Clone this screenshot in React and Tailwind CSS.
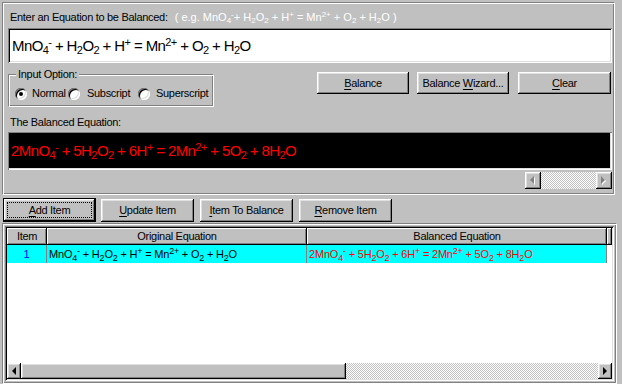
import React from "react";

function parseEq(s) {
  const out = [];
  let buf = "";
  let i = 0;
  const flush = () => {
    if (buf) out.push({ t: buf, k: "n" });
    buf = "";
  };
  while (i < s.length) {
    const c = s[i];
    if (c === "_" || c === "^") {
      flush();
      let t = "";
      if (s[i + 1] === "{") {
        const j = s.indexOf("}", i + 2);
        t = s.slice(i + 2, j);
        i = j + 1;
      } else {
        t = s[i + 1];
        i += 2;
      }
      out.push({ t, k: c === "_" ? "b" : "p" });
    } else {
      buf += c;
      i++;
    }
  }
  flush();
  return out;
}

function Eq({ s, sub, sup, className }) {
  const parts = parseEq(s);
  return (
    <span className={"whitespace-pre " + (className || "")}>
      {parts.map((p, i) =>
        p.k === "n" ? (
          <span key={i}>{p.t}</span>
        ) : (
          <span key={i} className={p.k === "b" ? sub : sup}>
            {p.t}
          </span>
        )
      )}
    </span>
  );
}

const EQ = "MnO_4^- + H_2O_2 + H^+ = Mn^{2+} + O_2 + H_2O";
const BAL = "2MnO_4^- + 5H_2O_2 + 6H^+ = 2Mn^{2+} + 5O_2 + 8H_2O";

function Btn({ children, className }) {
  return (
    <div
      className={
        "flex items-center justify-center bg-[#c0c0c0] shadow-[inset_-1px_-1px_0_#000,inset_1px_1px_0_#fff,inset_-2px_-2px_0_#808080,inset_2px_2px_0_#dfdfdf] " +
        (className || "")
      }
    >
      {children}
    </div>
  );
}

function U({ children }) {
  return <span className="underline underline-offset-[2px] decoration-1">{children}</span>;
}

function Radio({ checked }) {
  return (
    <div className="w-[12px] h-[12px] rounded-full bg-white shadow-[inset_1px_1px_0_#808080,inset_-1px_-1px_0_#fff,inset_2px_2px_0_#000,inset_-2px_-2px_0_#dfdfdf] flex items-center justify-center shrink-0">
      {checked && <div className="w-[4px] h-[4px] rounded-full bg-black" />}
    </div>
  );
}

function Arrow({ dir, disabled }) {
  const pts = dir === "l" ? "4,0 4,8 0,4" : "0,0 0,8 4,4";
  if (disabled) {
    return (
      <svg width="6" height="9" viewBox="0 0 6 9">
        <polygon points={pts} transform="translate(1,1)" fill="#ffffff" />
        <polygon points={pts} fill="#808080" />
      </svg>
    );
  }
  return (
    <svg width="5" height="8" viewBox="0 0 5 8">
      <polygon points={pts} fill="#000" />
    </svg>
  );
}

const checker =
  "bg-[image:repeating-conic-gradient(#c0c0c0_0%_25%,#ffffff_0%_50%)] bg-[length:2px_2px]";

export default function App() {
  return (
    <div className="w-[622px] h-[384px] bg-[#c0c0c0] overflow-hidden flex flex-col font-['Liberation_Sans',Arial,sans-serif] text-[11px] tracking-[-0.3px] text-black leading-[13px]">
      {/* Top panel */}
      <div className="ml-[2px] mt-[2px] w-[613px] h-[193px] shrink-0 border border-t-[#808080] border-l-[#808080] border-r-white border-b-white shadow-[inset_1px_1px_0_#fff,inset_-1px_-1px_0_#808080] flex flex-col pl-[5px] pr-[2px]">
        <div className="mt-[8px] h-[13px] flex items-baseline pl-[2px]">
          <span>Enter an Equation to be Balanced:</span>
          <span className="ml-[7px] text-white tracking-normal">
            <Eq
              s="( e.g. MnO_4^-+ H_2O_2 + H^+ = Mn^{2+} + O_2 + H_2O )"
              sub="relative top-[2px] text-[8px] leading-none"
              sup="relative -top-[4px] text-[8px] leading-none"
            />
          </span>
        </div>
        <div className="mt-[4px] h-[35px] bg-white shadow-[inset_1px_1px_0_#808080,inset_-1px_-1px_0_#fff,inset_2px_2px_0_#000,inset_-2px_-2px_0_#dfdfdf] flex items-center pl-[4px]">
          <Eq
            s={EQ}
            className="text-[15px] leading-[18px] tracking-[-0.6px]"
            sub="relative top-[3px] text-[11px] leading-none"
            sup="relative -top-[5px] text-[11px] leading-none"
          />
        </div>
        <div className="mt-[9px] h-[35px] flex items-start">
          <div className="relative mt-[2px] w-[206px] h-[33px] border border-t-[#808080] border-l-[#808080] border-r-white border-b-white shadow-[inset_1px_1px_0_#fff,inset_-1px_-1px_0_#808080] flex items-start pl-[6px] pt-[12px]">
            <span className="absolute left-[7px] -top-[7px] bg-[#c0c0c0] px-[2px]">Input Option:</span>
            <div className="w-[53px] flex items-center">
              <Radio checked />
              <span className="ml-[5px]">Normal</span>
            </div>
            <div className="w-[70px] flex items-center">
              <Radio />
              <span className="ml-[7px]">Subscript</span>
            </div>
            <div className="flex items-center">
              <Radio />
              <span className="ml-[6px]">Superscript</span>
            </div>
          </div>
          <Btn className="ml-[103px] w-[92px] h-[22px]">
            <span>
              <U>B</U>alance
            </span>
          </Btn>
          <Btn className="ml-[8px] w-[92px] h-[22px]">
            <span>
              Balance <U>W</U>izard...
            </span>
          </Btn>
          <Btn className="ml-[9px] w-[93px] h-[22px]">
            <span>
              <U>C</U>lear
            </span>
          </Btn>
        </div>
        <div className="mt-[9px] h-[13px] pl-[2px]">The Balanced Equation:</div>
        <div className="mt-[3px] h-[38px] bg-black shadow-[inset_1px_1px_0_#808080,inset_-1px_-1px_0_#fff,inset_-2px_-2px_0_#dfdfdf] flex items-center pl-[3px] text-[#ff0000]">
          <Eq
            s={BAL}
            className="text-[15px] leading-[18px] tracking-[-0.6px]"
            sub="relative top-[3px] text-[11px] leading-none"
            sup="relative -top-[5px] text-[11px] leading-none"
          />
        </div>
        <div className="mt-[2px] self-end w-[87px] h-[17px] flex">
          <Btn className="w-[16px] h-[17px]">
            <Arrow dir="l" disabled />
          </Btn>
          <div className={"flex-1 " + checker} />
          <Btn className="w-[16px] h-[17px]">
            <Arrow dir="r" disabled />
          </Btn>
        </div>
      </div>

      {/* Buttons row */}
      <div className="mt-[3px] h-[24px] shrink-0 flex items-center pl-[3px]">
        <div className="w-[93px] h-[24px] border border-black">
          <Btn className="w-full h-full relative">
            <div className="absolute left-[3px] top-[3px] right-[3px] bottom-[3px] border border-dotted border-black" />
            <span>
              <U>A</U>dd Item
            </span>
          </Btn>
        </div>
        <Btn className="ml-[5px] w-[93px] h-[23px]">
          <span>
            <U>U</U>pdate Item
          </span>
        </Btn>
        <Btn className="ml-[6px] w-[93px] h-[23px]">
          <span>
            <U>I</U>tem To Balance
          </span>
        </Btn>
        <Btn className="ml-[6px] w-[93px] h-[23px]">
          <span>
            <U>R</U>emove Item
          </span>
        </Btn>
      </div>

      {/* List panel */}
      <div className="ml-[2px] mt-[1px] w-[615px] h-[161px] shrink-0 border border-t-[#808080] border-l-[#808080] border-r-white border-b-white shadow-[inset_1px_1px_0_#fff,inset_-1px_-1px_0_#808080] p-[2px]">
        <div className="h-full bg-white shadow-[inset_1px_1px_0_#808080,inset_-1px_-1px_0_#fff,inset_2px_2px_0_#000,inset_-2px_-2px_0_#dfdfdf] p-[2px] flex flex-col">
          <div className="h-[17px] flex shrink-0">
            <Hdr className="w-[40px]">Item</Hdr>
            <Hdr className="w-[260px]">Original Equation</Hdr>
            <Hdr className="w-[300px]">Balanced Equation</Hdr>
            <Hdr className="flex-1" />
          </div>
          <div className="h-[18px] flex shrink-0 bg-[#00ffff]">
            <div className="w-[40px] border-r border-[#808080] flex items-center justify-center text-[#0000ff]">1</div>
            <div className="w-[260px] border-r border-[#808080] flex items-center pl-[2px] overflow-hidden">
              <Eq
                s={EQ}
                className="tracking-[-0.2px]"
                sub="relative top-[3px] text-[9px] leading-none"
                sup="relative -top-[4px] text-[9px] leading-none"
              />
            </div>
            <div className="w-[300px] border-r border-[#808080] flex items-center pl-[2px] text-[#ff0000] overflow-hidden">
              <Eq
                s={BAL}
                className="tracking-[-0.2px]"
                sub="relative top-[3px] text-[9px] leading-none"
                sup="relative -top-[4px] text-[9px] leading-none"
              />
            </div>
            <div className="flex-1 bg-white" />
          </div>
          <div className="flex-1" />
          <div className="h-[16px] flex shrink-0">
            <Btn className="w-[14px] h-[16px]">
              <Arrow dir="l" />
            </Btn>
            <Btn className="w-[325px] h-[16px]" />
            <div className={"flex-1 " + checker} />
            <Btn className="w-[14px] h-[16px]">
              <Arrow dir="r" />
            </Btn>
          </div>
        </div>
      </div>
    </div>
  );
}

function Hdr({ children, className }) {
  return (
    <div
      className={
        "h-full bg-[#c0c0c0] shadow-[inset_-1px_-1px_0_#000,inset_1px_1px_0_#fff,inset_-2px_-2px_0_#808080] flex items-center justify-center " +
        (className || "")
      }
    >
      {children}
    </div>
  );
}
